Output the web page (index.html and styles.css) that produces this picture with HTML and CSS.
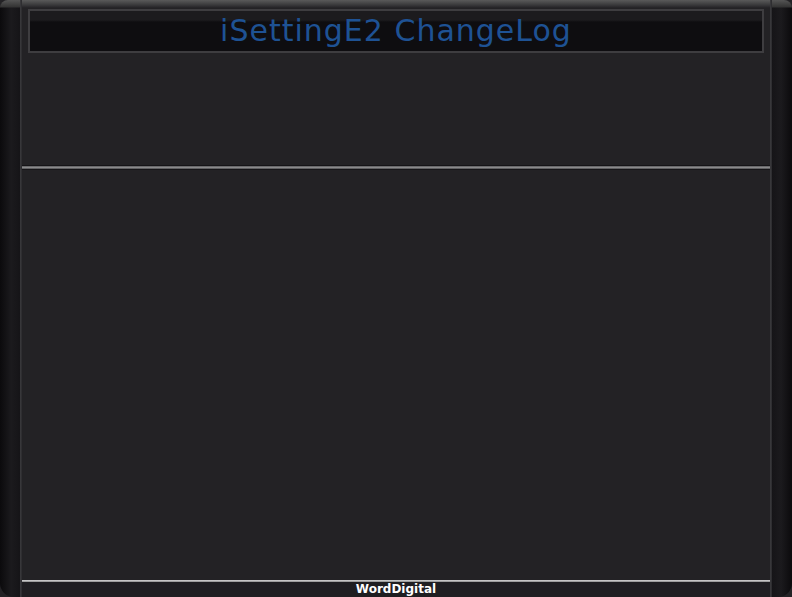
FILE: index.html
```html
<!DOCTYPE html>
<html>
<head>
<meta charset="utf-8">
<link rel="stylesheet" href="styles.css">
</head>
<body>
<div class="screen">
  <div class="side side-left"><div class="side-edge"></div></div>
  <div class="main">
    <div class="top-band"></div>
    <div class="header">
      <div class="title-bar"><span class="title">iSettingE2 ChangeLog</span></div>
    </div>
    <div class="separator"></div>
    <div class="content"></div>
    <div class="footer-line"></div>
    <div class="footer"><span class="brand">WordDigital</span></div>
  </div>
  <div class="side side-right"><div class="side-edge"></div></div>
</div>
</body>
</html>
```
FILE: styles.css
```css
html, body {
  margin: 0;
  padding: 0;
  background: #ffffff;
}
.screen {
  width: 792px;
  height: 597px;
  display: flex;
  background: #232225;
  overflow: hidden;
}
.side {
  width: 22px;
  display: flex;
}
.side-left {
  border-radius: 8px 0 0 14px;
  justify-content: flex-end;
  background: linear-gradient(to bottom, #555 0, #333 7px, transparent 8px),
              linear-gradient(to right, #0b0a0c, #1b1a1d 50%, #141316);
}
.side-right {
  border-radius: 0 8px 14px 0;
  justify-content: flex-start;
  background: linear-gradient(to bottom, #555 0, #333 7px, transparent 8px),
              linear-gradient(to right, #141316, #1b1a1d 50%, #0b0a0c);
}
.side-edge {
  width: 2px;
  background: linear-gradient(to right, #3c3c3f, #2a292c);
}
.main {
  flex: 1;
  display: flex;
  flex-direction: column;
}
.top-band {
  height: 8px;
  background: linear-gradient(to bottom, #5a5a5a, #3a3a3c 60%, #222124);
}
.header {
  height: 157px;
  padding: 1px 6px 0 6px;
  box-sizing: border-box;
}
.title-bar {
  height: 44px;
  box-sizing: border-box;
  border: 2px solid #3e3d40;
  background: linear-gradient(to bottom, #1c1b1e 0, #1c1b1e 9px, #0e0d10 11px, #0e0d10);
  display: flex;
  align-items: center;
  justify-content: center;
}
.title {
  font-family: "DejaVu Sans", sans-serif;
  font-size: 30px;
  color: #1e5294;
  letter-spacing: 1px;
  margin-top: -1px;
}
.separator {
  height: 5px;
  box-sizing: border-box;
  border-top: 1px solid #151417;
  border-bottom: 1px solid #151417;
  background: linear-gradient(to bottom, #5a5a5c, #8a8a8c 50%, #4a4a4c);
}
.content {
  flex: 1;
}
.footer-line {
  height: 2px;
  background: linear-gradient(to bottom, #d8d8d8, #8a8a8a);
}
.footer {
  height: 15px;
  background: #1f1e21;
  display: flex;
  justify-content: center;
  align-items: center;
}
.brand {
  font-family: "DejaVu Sans", sans-serif;
  font-weight: bold;
  font-size: 12px;
  color: #ffffff;
  line-height: 15px;
}
```
